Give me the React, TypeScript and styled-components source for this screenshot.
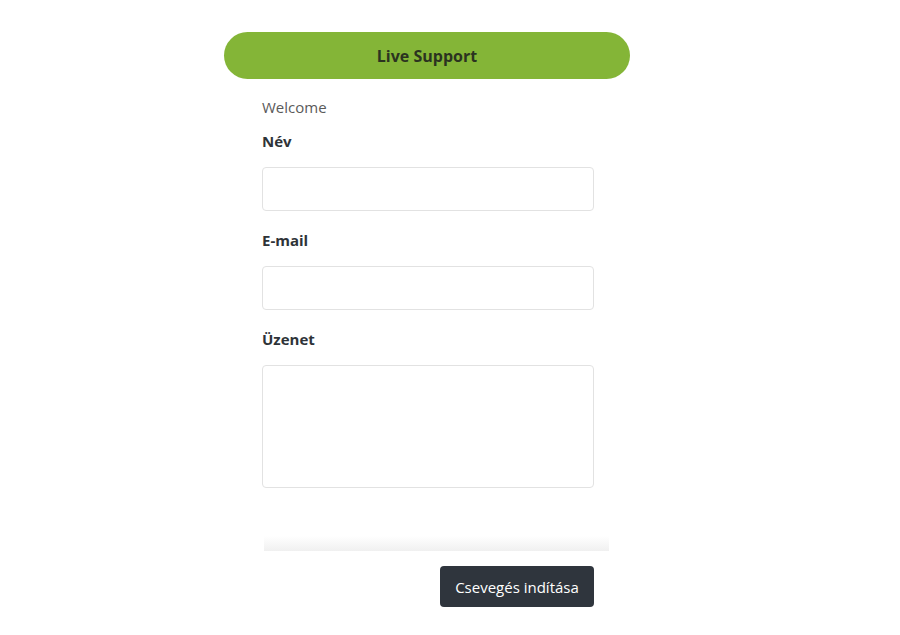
import React from "react";
import styled, { createGlobalStyle } from "styled-components";

const GlobalStyle = createGlobalStyle`
    html, body {
        margin: 0;
        padding: 0;
        background: #ffffff;
        font-family: "Open Sans", "Noto Sans", Arial, sans-serif;
    }
    * {
        box-sizing: border-box;
    }
`;

const Page = styled.div`
    width: 900px;
    height: 635px;
    padding-top: 32px;
    padding-left: 224px;
    overflow: hidden;
`;

const Widget = styled.div`
    width: 406px;
    display: flex;
    flex-direction: column;
`;

const Header = styled.div`
    height: 47px;
    border-radius: 24px;
    background: #84b537;
    display: flex;
    align-items: center;
    justify-content: center;

    font-size: 16px;
    font-weight: 700;
    color: #2b3320;
`;

const Body = styled.div`
    width: 385px;
    padding-left: 38px;
    display: flex;
    flex-direction: column;
`;

const Welcome = styled.div`
    margin-top: 18px;
    line-height: 20px;
    font-size: 15px;
    color: #5a5a5a;
`;

const Label = styled.label<{ $first?: boolean }>`
    display: block;
    margin-top: ${props => (props.$first ? "14px" : "19px")};
    margin-bottom: 16px;
    line-height: 20px;
    font-size: 15px;
    font-weight: 700;
    color: #2e3338;
`;

const Input = styled.input`
    width: 332px;
    height: 44px;
    border: 1px solid #e2e2e2;
    border-radius: 4px;
    background: #fff;
    outline: none;
`;

const TextArea = styled.textarea`
    width: 332px;
    height: 123px;
    border: 1px solid #e2e2e2;
    border-radius: 4px;
    background: #fff;
    resize: none;
    outline: none;
`;

const Fade = styled.div`
    margin-top: 48px;
    margin-left: 2px;
    width: 345px;
    height: 15px;
    background: linear-gradient(to bottom, #ffffff 0%, #f0f0f0 100%);
`;

const Footer = styled.div`
    width: 332px;
    display: flex;
    justify-content: flex-end;
    padding-top: 15px;
`;

const StartButton = styled.button`
    width: 154px;
    height: 41px;
    border: none;
    border-radius: 4px;
    background: #2f353d;
    color: #ffffff;
    font-family: inherit;
    font-size: 15px;
    cursor: pointer;
`;

export default function App() {
    return (
        <>
            <GlobalStyle />
            <Page>
                <Widget>
                    <Header>Live Support</Header>
                    <Body>
                        <Welcome>Welcome</Welcome>
                        <Label $first>Név</Label>
                        <Input type="text" />
                        <Label>E-mail</Label>
                        <Input type="email" />
                        <Label>Üzenet</Label>
                        <TextArea />
                        <Fade />
                        <Footer>
                            <StartButton>Csevegés indítása</StartButton>
                        </Footer>
                    </Body>
                </Widget>
            </Page>
        </>
    );
}
